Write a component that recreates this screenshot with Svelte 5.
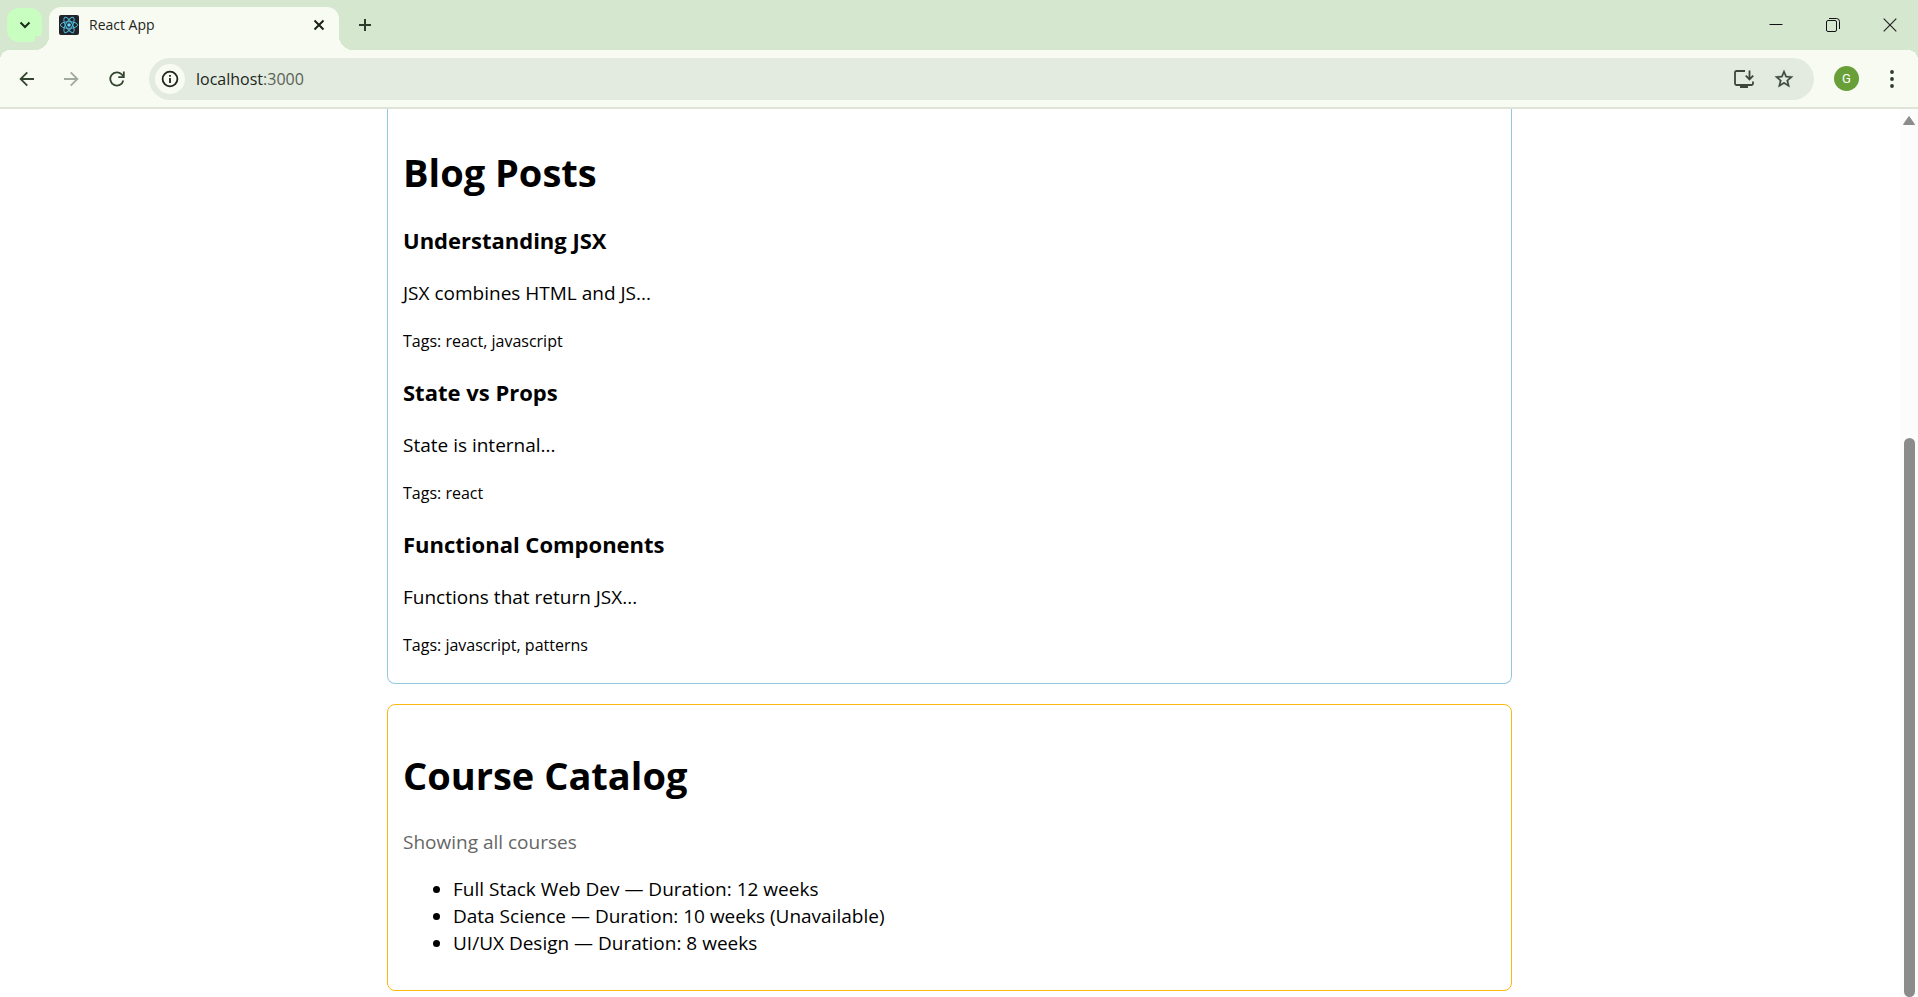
<script>
  const posts = [
    { title: 'Understanding JSX', body: 'JSX combines HTML and JS...', tags: ['react', 'javascript'] },
    { title: 'State vs Props', body: 'State is internal...', tags: ['react'] },
    { title: 'Functional Components', body: 'Functions that return JSX...', tags: ['javascript', 'patterns'] }
  ];

  const courses = [
    { name: 'Full Stack Web Dev', weeks: 12, available: true },
    { name: 'Data Science', weeks: 10, available: false },
    { name: 'UI/UX Design', weeks: 8, available: true }
  ];

  let host = 'localhost';
  let port = ':3000';
  let editing = false;
</script>

<div class="window">
  <header class="strip">
    <button class="search-tabs" aria-label="Search tabs">
      <svg width="12" height="8" viewBox="0 0 12 8"><path d="M1.5 1.5 6 6l4.5-4.5" fill="none" stroke="#1a2a18" stroke-width="2" /></svg>
    </button>
    <div class="tab">
      <svg class="favicon" width="20" height="20" viewBox="0 0 20 20">
        <rect width="20" height="20" rx="2" fill="#20232a" />
        <g fill="none" stroke="#4fb9d6" stroke-width="1">
          <ellipse cx="10" cy="10" rx="8.6" ry="3.3" />
          <ellipse cx="10" cy="10" rx="8.6" ry="3.3" transform="rotate(60 10 10)" />
          <ellipse cx="10" cy="10" rx="8.6" ry="3.3" transform="rotate(120 10 10)" />
        </g>
        <circle cx="10" cy="10" r="1.8" fill="#61dafb" />
      </svg>
      <span class="tab-title">React App</span>
      <button class="tab-close" aria-label="Close tab">
        <svg width="12" height="12" viewBox="0 0 12 12"><path d="m1.5 1.5 9 9m0-9-9 9" stroke="#1a2318" stroke-width="2" /></svg>
      </button>
    </div>
    <button class="new-tab" aria-label="New tab">
      <svg width="14" height="14" viewBox="0 0 14 14"><path d="M7 1v12M1 7h12" stroke="#2c3b2a" stroke-width="2" /></svg>
    </button>
    <div class="window-buttons">
      <button aria-label="Minimize">
        <svg width="14" height="14" viewBox="0 0 14 14"><path d="M.5 6.5h13" stroke="#111" /></svg>
      </button>
      <button aria-label="Restore">
        <svg width="14" height="14" viewBox="0 0 14 14" fill="none" stroke="#111"><rect x=".5" y="2.500" width="10" height="11" rx="1.500" /><path d="M3 .5h7.500a3 3 0 0 1 3 3v7.500" /></svg>
      </button>
      <button aria-label="Close window">
        <svg width="14" height="14" viewBox="0 0 14 14"><path d="m.7.7 12.600 12.600m0-12.600L.7 13.300" stroke="#222" stroke-width="1.200" /></svg>
      </button>
    </div>
  </header>

  <nav class="toolbar" aria-label="Browser">
    <button class="tool" aria-label="Back">
      <svg width="16" height="16" viewBox="0 0 16 16"><path d="M15 8H2M8.300 1.300 1.600 8l6.700 6.700" fill="none" stroke="#34452f" stroke-width="1.800" /></svg>
    </button>
    <button class="tool" aria-label="Forward" disabled>
      <svg width="16" height="16" viewBox="0 0 16 16"><path d="M1 8h13M7.700 1.300 14.400 8l-6.700 6.700" fill="none" stroke="#a2a9a0" stroke-width="1.800" /></svg>
    </button>
    <button class="tool reload" aria-label="Reload">
      <svg width="16" height="16" viewBox="0 0 16 16"><path d="M14.300 9.500A6.600 6.600 0 1 1 12.800 3.500l1.400 1.600" fill="none" stroke="#34452f" stroke-width="1.800" /><path d="M14.800.6v5.500H9.300" fill="none" stroke="#34452f" stroke-width="1.800" /></svg>
    </button>
    <div class="address">
      <button class="site-info" aria-label="View site information">
        <svg width="18" height="18" viewBox="0 0 18 18"><circle cx="9" cy="9" r="7.400" fill="none" stroke="#1d261b" stroke-width="1.800" /><path d="M9 8v5M9 5v1.800" stroke="#1d261b" stroke-width="1.800" /></svg>
      </button>
      <div class="url">
        {#if !editing}
          <span class="url-text">{host}<span class="port">{port}</span></span>
        {/if}
        <input
          aria-label="Address and search bar"
          value={editing ? host + port : ''}
          on:focus={() => (editing = true)}
          on:blur={() => (editing = false)}
        />
      </div>
      <button class="address-action" aria-label="Install app">
        <svg width="20" height="18" viewBox="0 0 20 18" fill="none" stroke="#3c4639" stroke-width="1.800"><path d="M11 1H2.500A1.500 1.500 0 0 0 1 2.500v11A1.500 1.500 0 0 0 2.500 15h15a1.500 1.500 0 0 0 1.500-1.500V11.500" /><path d="M15.500.500v8.500M11.800 5.700l3.700 3.700 3.700-3.700" /><path d="M6 15h8v3H6z" fill="#3c4639" stroke="none" /></svg>
      </button>
      <button class="address-action" aria-label="Bookmark this tab">
        <svg width="22" height="22" viewBox="0 0 24 24" fill="#3c4639" stroke="#3c4639" stroke-width=".3"><path d="M22 9.240l-7.190-.620L12 2 9.190 8.630 2 9.240l5.460 4.730L5.820 21 12 17.270 18.180 21l-1.630-7.030L22 9.240zM12 15.400l-3.760 2.270 1-4.280-3.320-2.880 4.380-.380L12 6.100l1.710 4.040 4.380.380-3.320 2.880 1 4.280L12 15.400z" /></svg>
      </button>
    </div>
    <button class="avatar" aria-label="Profile">G</button>
    <button class="tool" aria-label="Menu">
      <svg width="4" height="18" viewBox="0 0 4 18" fill="#2c3b2a"><circle cx="2" cy="2" r="1.900" /><circle cx="2" cy="9" r="1.900" /><circle cx="2" cy="16" r="1.900" /></svg>
    </button>
  </nav>

  <div class="viewport">
    <main>
      <section class="blog">
        <h1>Blog Posts</h1>
        {#each posts as post}
          <article>
            <h3>{post.title}</h3>
            <p>{post.body}</p>
            <p class="tags">Tags: {post.tags.join(', ')}</p>
          </article>
        {/each}
      </section>
      <section class="courses">
        <h1>Course Catalog</h1>
        <p class="note">Showing all courses</p>
        <ul>
          {#each courses as course}
            <li>{course.name} — Duration: {course.weeks} weeks{course.available ? '' : ' (Unavailable)'}</li>
          {/each}
        </ul>
      </section>
    </main>
    <div class="scrollbar">
      <svg width="14" height="22" viewBox="0 0 14 22"><path d="M7 7.500 12.500 15.500h-11z" fill="#8b8b8b" stroke="#8b8b8b" stroke-linejoin="round" /></svg>
      <div class="thumb"></div>
    </div>
  </div>
</div>

<style>
  .window {
    height: 100vh;
    display: flex;
    flex-direction: column;
    overflow: hidden;
    background: #fff;
    color: #000;
    font-family: "Open Sans", "Noto Sans", sans-serif;
  }
  button {
    display: flex;
    align-items: center;
    justify-content: center;
    padding: 0;
    border: 0;
    background: none;
    font: inherit;
    flex: none;
  }
  svg {
    display: block;
    flex: none;
  }

  .strip {
    height: 50px;
    flex: none;
    display: flex;
    background: #d5e7cf;
  }
  .search-tabs {
    width: 35px;
    height: 34px;
    margin: 8px 7px 0;
    border-radius: 12px;
    background: #c8ffc0;
  }
  .tab {
    position: relative;
    width: 290px;
    box-sizing: border-box;
    margin-top: 7px;
    padding: 0 12px 7px 10px;
    display: flex;
    align-items: center;
    border-radius: 12px 12px 0 0;
    background: #f8fbf2;
  }
  .tab::before,
  .tab::after {
    content: "";
    position: absolute;
    bottom: 0;
    width: 14px;
    height: 14px;
  }
  .tab::before {
    right: 100%;
    background: radial-gradient(circle at 0 0, #d5e7cf 14px, #f8fbf2 14px);
  }
  .tab::after {
    left: 100%;
    background: radial-gradient(circle at 100% 0, #d5e7cf 14px, #f8fbf2 14px);
  }
  .tab-title {
    flex: 1;
    margin-left: 10px;
    font-size: 14px;
    line-height: 20px;
    color: #1d261b;
  }
  .tab-close {
    width: 16px;
    height: 20px;
  }
  .new-tab {
    width: 34px;
    height: 34px;
    margin: 8px 0 0 9px;
  }
  .window-buttons {
    margin-left: auto;
    display: flex;
  }
  .window-buttons button {
    width: 57px;
    height: 49px;
  }

  .toolbar {
    height: 57px;
    flex: none;
    display: flex;
    align-items: center;
    padding: 0 4px 0 5px;
    border-bottom: 2px solid #dee5d8;
    background:
      radial-gradient(circle at 10px 10px, transparent 10px, #d5e7cf 10px) 0 0 / 10px 10px no-repeat,
      radial-gradient(circle at 0 10px, transparent 10px, #d5e7cf 10px) 100% 0 / 10px 10px no-repeat,
      #f8fbf2;
  }
  .tool {
    width: 44px;
    height: 36px;
  }
  .reload {
    width: 48px;
  }
  .address {
    flex: 1;
    height: 42px;
    box-sizing: border-box;
    margin-left: 8px;
    padding: 0 10px 0 6px;
    display: flex;
    align-items: center;
    border-radius: 21px;
    background: #e3ebe0;
  }
  .site-info {
    width: 30px;
    height: 30px;
    border-radius: 50%;
    background: #f8fbf2;
  }
  .url {
    position: relative;
    flex: 1;
    margin-left: 11px;
    font-size: 16px;
    line-height: 24px;
    color: #1d261b;
  }
  .port {
    color: #586155;
  }
  .url input {
    position: absolute;
    inset: 0;
    width: 100%;
    padding: 0;
    border: 0;
    outline: 0;
    background: none;
    color: inherit;
    font: inherit;
  }
  .address-action {
    width: 40px;
    height: 36px;
  }
  .avatar {
    width: 25px;
    height: 25px;
    margin: 0 11px 0 20px;
    border-radius: 50%;
    background: #689f38;
    color: #fff;
    font-family: Roboto, sans-serif;
    font-size: 13px;
  }

  .viewport {
    flex: 1;
    min-height: 0;
    display: flex;
  }
  main {
    flex: 1;
    padding-right: 1px;
    font-size: 19px;
    line-height: 27px;
  }
  section {
    max-width: 1125px;
    box-sizing: border-box;
    margin: 0 auto 20px;
    padding: 17px 15px 13px;
    border: 1px solid #fdb813;
    border-radius: 8px;
  }
  .blog {
    padding-top: 10px;
    padding-bottom: 4px;
    border-color: #93c9df;
    border-top: 0;
    border-radius: 0 0 8px 8px;
  }
  h1 {
    margin: 27px 0;
    font-size: 38px;
    line-height: 53px;
  }
  .blog h1 {
    margin-bottom: 25px;
  }
  h3 {
    margin: 21px 0 24px;
    font-size: 22px;
    line-height: 32px;
  }
  p {
    margin: 20px 0;
  }
  .tags {
    margin-top: 21px;
    font-size: 16px;
  }
  .note {
    color: #666;
  }
  ul {
    margin: 20px 0;
    padding-left: 50px;
  }
  .scrollbar {
    width: 18px;
    flex: none;
    display: flex;
    flex-direction: column;
    align-items: center;
    justify-content: space-between;
    background: #fcfcfc;
  }
  .thumb {
    width: 11px;
    height: 63%;
    border-radius: 6px;
    background: #8b8b8b;
  }
</style>
